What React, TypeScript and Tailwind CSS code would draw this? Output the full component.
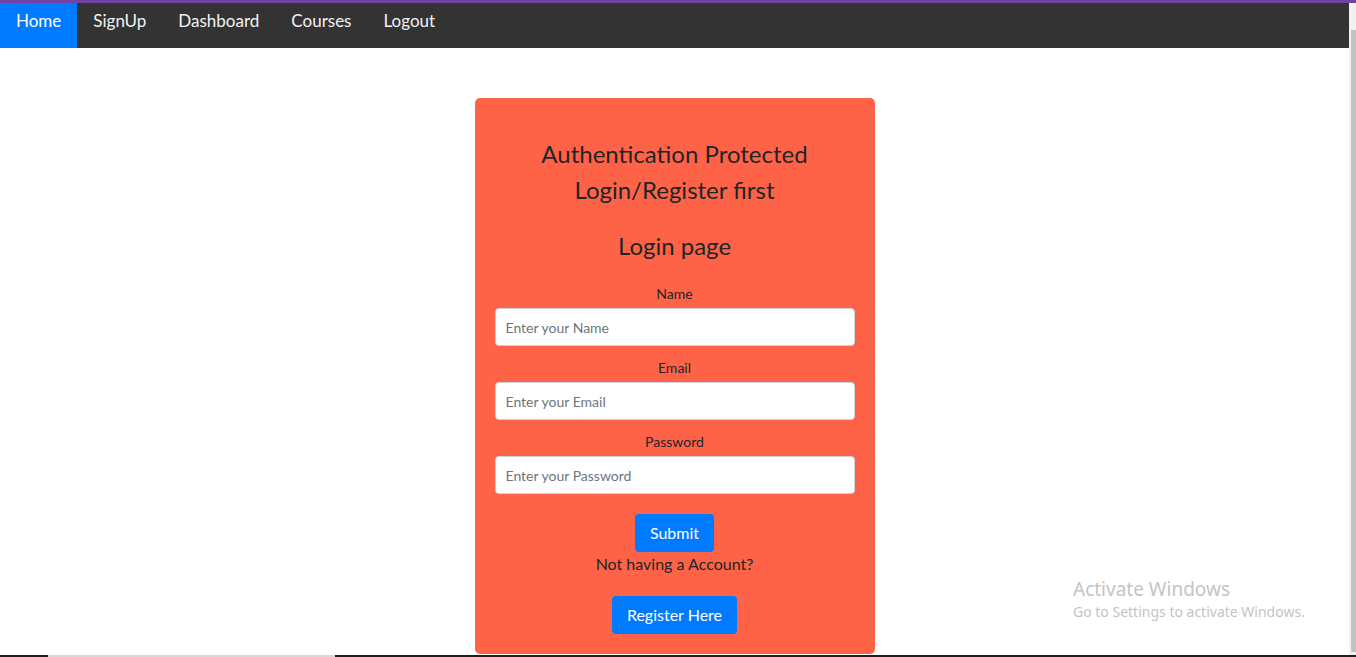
import React from "react";

const NAV_LINKS = ["Home", "SignUp", "Dashboard", "Courses", "Logout"];

const FONT = { fontFamily: '"Lato", "Noto Sans", sans-serif' };

function Field({ label, placeholder, type = "text" }: { label: string; placeholder: string; type?: string }) {
  return (
    <div className="mb-[11px] flex flex-col">
      <label className="mb-[4px] text-center text-[14px] leading-[21px] text-[#212529]">{label}</label>
      <input
        type={type}
        placeholder={placeholder}
        className="h-[38px] w-full rounded-[4px] border border-[#ced4da] bg-white px-[10px] text-[14px] text-[#495057] placeholder:text-[#6c757d] outline-none"
      />
    </div>
  );
}

export default function App() {
  return (
    <div className="relative flex h-[657px] flex-col overflow-hidden bg-white" style={FONT}>
      {/* top accent strip */}
      <div className="h-[3px] shrink-0 bg-[#6f42a6]" />

      <div className="flex min-h-0 flex-1">
        <div className="flex min-w-0 flex-1 flex-col">
          {/* Navbar */}
          <nav className="flex h-[45px] shrink-0 bg-[#333333]">
            {NAV_LINKS.map((link, i) => (
              <a
                key={link}
                href="#"
                className={
                  i === 0
                    ? "block bg-[#007bff] px-4 pt-[6px] text-[17px] leading-[24px] text-white"
                    : "block px-4 pt-[6px] text-[17px] leading-[24px] text-[#f2f2f2]"
                }
              >
                {link}
              </a>
            ))}
          </nav>

          <main className="flex-1 pt-[50px]">
            <div className="mx-auto w-[400px] rounded-[5px] bg-[#ff6347] px-5 pb-[20px] pt-[38px] text-[#212529]">
              <h2 className="text-center text-[24px] leading-[36px]">
                Authentication Protected
                <br />
                Login/Register first
              </h2>
              <h2 className="mb-[19px] mt-[20px] text-center text-[24px] leading-[36px]">Login page</h2>

              <Field label="Name" placeholder="Enter your Name" />
              <Field label="Email" placeholder="Enter your Email" type="email" />
              <Field label="Password" placeholder="Enter your Password" type="password" />

              <div className="mt-[20px] flex flex-col items-center">
                <button className="h-[38px] rounded-[4px] bg-[#007bff] px-[15px] text-[16px] text-white">Submit</button>
                <p className="text-[16px] leading-[24px] text-[#212529]">Not having a Account?</p>
                <button className="mt-[20px] h-[38px] rounded-[4px] bg-[#007bff] px-[15px] text-[16px] text-white">
                  Register Here
                </button>
              </div>
            </div>
          </main>
        </div>

        {/* scrollbar */}
        <div className="relative w-[7px] shrink-0 bg-[#f1f1f1]">
          <div className="absolute bottom-[3px] left-[2px] right-0 top-[27px] bg-[#c1c1c1]" />
        </div>
      </div>

      {/* taskbar edge */}
      <div className="flex h-[2px] shrink-0 bg-[#1f1f1f]">
        <div className="ml-[48px] w-[287px] bg-[#d9d9d9]" />
      </div>

      {/* Windows activation watermark */}
      <div
        className="pointer-events-none absolute left-[1073px] top-[576px] text-[#c4c4c4]"
        style={{ fontFamily: '"Noto Sans", "Open Sans", sans-serif' }}
      >
        <p className="text-[19px] leading-[26px]">Activate Windows</p>
        <p className="text-[14px] leading-[19px]">Go to Settings to activate Windows.</p>
      </div>
    </div>
  );
}
